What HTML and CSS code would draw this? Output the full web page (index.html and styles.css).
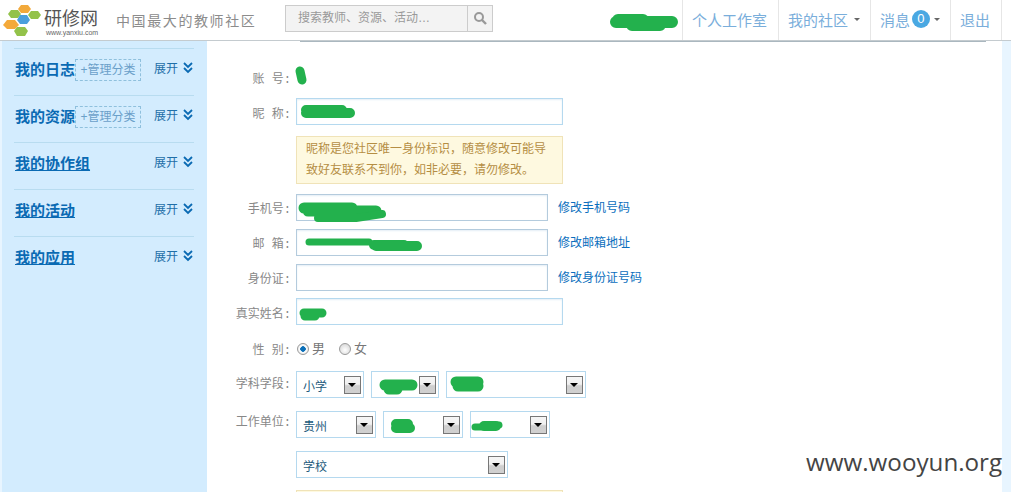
FILE: index.html
```html
<!DOCTYPE html>
<html lang="zh-CN">
<head>
<meta charset="utf-8">
<title>研修网</title>
<link rel="stylesheet" href="styles.css">
</head>
<body>
<header class="header">
  <a class="logo">
    <svg class="logo-mark" width="40" height="36" viewBox="0 0 40 36">
      <polygon points="17,7 20,3 27,3 30,7 27,11 20,11" fill="#f2a93b"/>
      <polygon points="7,12 10,8 17,8 20,12 17,16 10,16" fill="#93c24a"/>
      <polygon points="27,13 30,9 37,9 40,13 37,17 30,17" fill="#93c24a"/>
      <polygon points="16,18 19,13 26,13 29,18 26,22 19,22" fill="#4b9fdc"/>
      <polygon points="2,23 6,18 14,18 18,23 14,27 6,27" fill="#f4a93a"/>
      <polygon points="13,29 16,25 24,25 27,29 24,34 16,34" fill="#93c24a"/>
    </svg>
    <span class="logo-text">
      <span class="logo-name">研修网</span>
      <span class="logo-url">www.yanxiu.com</span>
    </span>
  </a>
  <span class="slogan">中国最大的教师社区</span>
  <div class="search">
    <span class="search-text">搜索教师、资源、活动…</span>
    <span class="search-btn">
      <svg width="14" height="14" viewBox="0 0 14 14"><circle cx="6" cy="6" r="4" fill="none" stroke="#999" stroke-width="2"/><path d="M9 9l4 4" stroke="#999" stroke-width="2.4"/></svg>
    </span>
  </div>
  <nav class="nav">
    <a class="nav-item">个人工作室</a>
    <a class="nav-item nav-caret">我的社区<i class="caret"></i></a>
    <a class="nav-item nav-caret">消息<span class="badge">0</span><i class="caret caret-near"></i></a>
    <a class="nav-item nav-last">退出</a>
  </nav>
</header>

<div class="page">
  <aside class="sidebar">
    <div class="side-item">
      <a class="side-title">我的日志</a><span class="manage">+管理分类</span>
      <span class="expand">展开<svg class="chev" width="10" height="12" viewBox="0 0 10 12"><path d="M1 1l4 4 4-4M1 6l4 4 4-4" fill="none" stroke="#0a6ab3" stroke-width="1.8"/></svg></span>
    </div>
    <div class="side-item">
      <a class="side-title">我的资源</a><span class="manage">+管理分类</span>
      <span class="expand">展开<svg class="chev" width="10" height="12" viewBox="0 0 10 12"><path d="M1 1l4 4 4-4M1 6l4 4 4-4" fill="none" stroke="#0a6ab3" stroke-width="1.8"/></svg></span>
    </div>
    <div class="side-item">
      <a class="side-title side-link">我的协作组</a>
      <span class="expand">展开<svg class="chev" width="10" height="12" viewBox="0 0 10 12"><path d="M1 1l4 4 4-4M1 6l4 4 4-4" fill="none" stroke="#0a6ab3" stroke-width="1.8"/></svg></span>
    </div>
    <div class="side-item">
      <a class="side-title side-link">我的活动</a>
      <span class="expand">展开<svg class="chev" width="10" height="12" viewBox="0 0 10 12"><path d="M1 1l4 4 4-4M1 6l4 4 4-4" fill="none" stroke="#0a6ab3" stroke-width="1.8"/></svg></span>
    </div>
    <div class="side-item">
      <a class="side-title side-link">我的应用</a>
      <span class="expand">展开<svg class="chev" width="10" height="12" viewBox="0 0 10 12"><path d="M1 1l4 4 4-4M1 6l4 4 4-4" fill="none" stroke="#0a6ab3" stroke-width="1.8"/></svg></span>
    </div>
  </aside>

  <main class="main">
    <div class="rule"></div>
    <form class="form">
      <div class="row row-account"><label class="lbl lbl-up">账&nbsp;号:</label></div>
      <div class="row gap-6"><label class="lbl lbl-low">昵&nbsp;称:</label><div class="input wide"></div></div>
      <div class="row gap-11"><span class="lbl"></span><div class="notice">昵称是您社区唯一身份标识，随意修改可能导致好友联系不到你，如非必要，请勿修改。</div></div>
      <div class="row gap-10"><label class="lbl">手机号:</label><div class="input narrow"></div><a class="link">修改手机号码</a></div>
      <div class="row gap-8"><label class="lbl">邮&nbsp;箱:</label><div class="input narrow"></div><a class="link">修改邮箱地址</a></div>
      <div class="row gap-8"><label class="lbl">身份证:</label><div class="input narrow"></div><a class="link">修改身份证号码</a></div>
      <div class="row gap-7"><label class="lbl lbl-low">真实姓名:</label><div class="input wide"></div></div>
      <div class="row row-radio">
        <label class="lbl">性&nbsp;别:</label>
        <span class="radio radio-on"></span><span class="radio-text">男</span>
        <span class="radio"></span><span class="radio-text">女</span>
      </div>
      <div class="row gap-12 row-select">
        <label class="lbl lbl-high">学科学段:</label>
        <div class="select w68"><span>小学</span><i class="arrow"></i></div>
        <div class="select w68"><i class="arrow"></i></div>
        <div class="select w140"><i class="arrow"></i></div>
      </div>
      <div class="row gap-13 row-select">
        <label class="lbl lbl-higher">工作单位:</label>
        <div class="select w80"><span>贵州</span><i class="arrow"></i></div>
        <div class="select w80"><i class="arrow"></i></div>
        <div class="select w80"><i class="arrow"></i></div>
      </div>
      <div class="row gap-13 row-select">
        <span class="lbl"></span>
        <div class="select w212"><span>学校</span><i class="arrow"></i></div>
      </div>
      <div class="row gap-12"><span class="lbl"></span><div class="notice"></div></div>
    </form>
  </main>
</div>

<svg class="scribbles" width="1011" height="492" viewBox="0 0 1011 492" fill="none" stroke="#23b14d" stroke-linecap="round" stroke-linejoin="round">
  <path d="M618 20h25M616 22h56M632 25h28" stroke-width="12"/>
  <path d="M300 71l2 9" stroke-width="9"/>
  <path d="M306 110h36M306 113h44" stroke-width="10"/>
  <path d="M304 208h48M308 211h68" stroke-width="11"/>
  <path d="M318 218h38l26-4" stroke-width="8"/>
  <path d="M309 242h60" stroke-width="7"/>
  <path d="M374 245h30M376 246h41" stroke-width="10"/>
  <path d="M304 313h18M305 316h10" stroke-width="9"/>
  <path d="M385 385h27M389 389h8" stroke-width="11"/>
  <path d="M456 382h22M458 386h20" stroke-width="11"/>
  <path d="M396 424h12M396 428h14" stroke-width="10"/>
  <path d="M475 427h12l12-2" stroke-width="7"/>
  <path d="M484 426h12" stroke-width="10"/>
</svg>
<div class="watermark">www.wooyun.org</div>
</body>
</html>
```

FILE: styles.css
```css
* { box-sizing: border-box; }
html, body { margin: 0; height: 492px; overflow: hidden; }
body {
  position: relative;
  background: #e8f5ff;
  font-family: "Liberation Sans", "Noto Sans CJK SC", sans-serif;
  font-size: 12px;
  color: #888;
}
a { text-decoration: none; }

/* header */
.header {
  display: flex;
  align-items: center;
  height: 41px;
  background: #fff;
  border-bottom: 1px solid #c4cbcf;
}
.logo { display: flex; align-items: flex-start; width: 116px; height: 40px; }
.logo-mark { margin: 2px 0 0 1px; }
.logo-text { display: flex; flex-direction: column; margin: 10px 0 0 3px; }
.logo-name { font-size: 18px; line-height: 19px; color: #555; }
.logo-url { font-family: "Liberation Sans", sans-serif; font-size: 7px; line-height: 7px; color: #666; margin-left: 2px; }
.slogan { width: 169px; font-size: 14px; letter-spacing: 1.6px; color: #8c8c8c; }
.search {
  display: flex;
  width: 208px;
  height: 27px;
  margin-top: -4px;
  background: #f3f3f3;
  border: 1px solid #ccc;
}
.search-text { flex: 1; padding-left: 12px; line-height: 25px; color: #999; }
.search-btn {
  display: flex;
  align-items: center;
  justify-content: center;
  width: 25px;
  border-left: 1px solid #ccc;
}
.nav { display: flex; margin-left: auto; margin-right: 9px; height: 40px; }
.nav-item {
  display: flex;
  align-items: center;
  padding: 0 11px 2px 9px;
  font-size: 15px;
  color: #7aaedb;
  border-left: 1px solid #e6e6e6;
}
.nav-caret { padding-right: 10px; }
.nav-last { border-right: 1px solid #e6e6e6; }
.caret {
  width: 0; height: 0;
  margin-left: 6px;
  border: 3px solid transparent;
  border-top: 3px solid #666;
  border-bottom: 0;
}
.caret-near { margin-left: 4px; }
.badge {
  width: 18px; height: 18px;
  margin-left: 2px;
  border-radius: 50%;
  background: #4aa8e2;
  color: #fff;
  font-size: 13px;
  line-height: 18px;
  text-align: center;
}

/* page */
.page { display: flex; height: 451px; }
.sidebar {
  flex: none;
  width: 205px;
  margin-left: 2px;
  padding: 7px 13px 0 12px;
  background: #d3ecfe;
}
.side-item {
  display: flex;
  align-items: center;
  height: 47px;
  padding: 0 1px 7px 1px;
  border-top: 1px solid #b8dcf0;
}
.side-title { font-size: 15px; font-weight: 700; color: #0a6ab3; }
.side-link { text-decoration: underline; }
.manage {
  width: 66px;
  height: 22px;
  margin-top: 3px;
  margin-top: 2px;
  border: 1px dashed #8fc0dd;
  line-height: 20px;
  text-align: center;
  color: #6ba0c9;
}
.expand { display: flex; align-items: center; margin-left: auto; margin-top: -3px; color: #1f6fa8; }
.chev { margin: 2px 0 0 5px; }

.main { flex: none; width: 795px; background: #fff; overflow: hidden; }
.rule { height: 1px; margin: 0 16px 0 93px; background: #aab7bf; }
.form { display: flex; flex-direction: column; }
.row { display: flex; align-items: center; flex: none; }
.row-account { height: 27px; margin-top: 23px; }
.gap-6 { margin-top: 6px; }
.gap-7 { margin-top: 7px; }
.gap-8 { margin-top: 8px; }
.gap-10 { margin-top: 10px; }
.gap-11 { margin-top: 11px; }
.gap-12 { margin-top: 12px; }
.gap-13 { margin-top: 13px; }
.row-radio { height: 20px; margin-top: 14px; }
.lbl {
  flex: none;
  width: 84px;
  margin-right: 5px;
  text-align: right;
  font-family: "Liberation Mono", "Noto Sans CJK SC", monospace;
  color: #888;
}
.lbl-up { padding-bottom: 2px; }
.lbl-low { padding-top: 2px; }
.lbl-high { padding-bottom: 4px; }
.lbl-higher { padding-bottom: 7px; }
.input { flex: none; height: 27px; background: #fff; box-shadow: inset 0 1px 2px #e4eef6; }
.wide { width: 267px; border: 1px solid #b5d9ef; }
.narrow { width: 252px; border: 1px solid #b4cbdd; }
.link { margin-left: 10px; padding-bottom: 2px; color: #0a6ebd; }
.notice {
  flex: none;
  width: 267px;
  height: 48px;
  padding: 2px 9px;
  background: #fef9e0;
  border: 1px solid #f0e3b8;
  color: #b58e44;
  line-height: 21px;
}
.radio {
  flex: none;
  width: 12px; height: 12px;
  border-radius: 50%;
  border: 1px solid #9a9a9a;
  background: radial-gradient(circle at 50% 60%, #fff, #d0d0d0);
}
.radio-on { background: radial-gradient(circle, #0b6fb8 0 2.5px, #fff 3px, #ddd); margin-left: 1px; }
.radio-text { width: 30px; padding-left: 3px; color: #777; font-size: 13px; line-height: 20px; }
.select {
  display: flex;
  align-items: center;
  flex: none;
  height: 27px;
  margin-right: 7px;
  padding: 0 2px 0 6px;
  background: #fff;
  border: 1px solid #b5d9ef;
  color: #235a7c;
}
.select span { padding-top: 1px; }
.w68 { width: 68px; }
.w80 { width: 80px; }
.w140 { width: 140px; }
.w212 { width: 212px; }
.arrow {
  position: relative;
  width: 17px; height: 18px;
  margin-left: auto;
  border: 1px solid #777;
  background: linear-gradient(#f6f6f6, #f0f0f0 45%, #cfcfcf 55%, #d0d0d0);
}
.arrow::after {
  content: "";
  position: absolute;
  left: 3px; top: 6px;
  border: 4px solid transparent;
  border-top: 4px solid #000;
  border-bottom: 0;
}

/* overlays */
.scribbles { position: absolute; left: 0; top: 0; pointer-events: none; }
.watermark {
  position: absolute;
  left: 806px; top: 447px;
  font-family: "Open Sans", sans-serif;
  font-size: 24.2px;
  line-height: 30px;
  color: #444;
}
```
